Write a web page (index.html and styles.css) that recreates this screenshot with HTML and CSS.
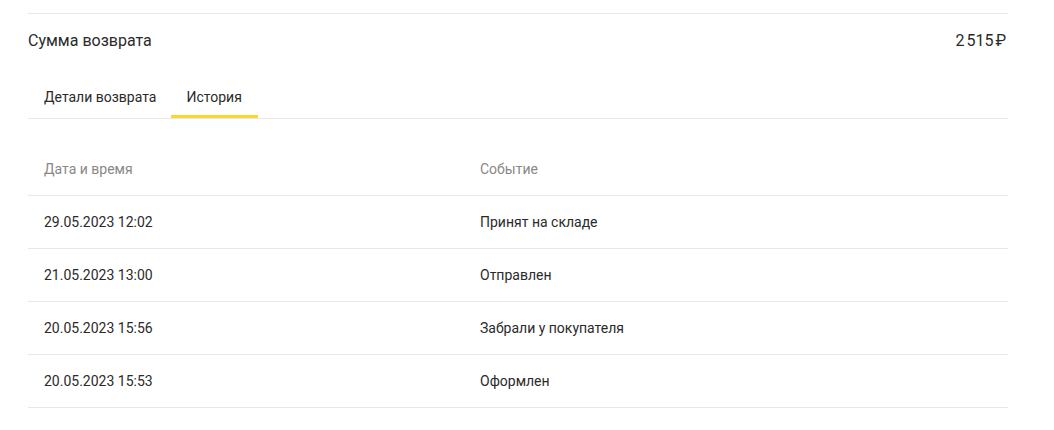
FILE: index.html
```html
<!DOCTYPE html>
<html lang="ru">
<head>
<meta charset="utf-8">
<link rel="stylesheet" href="styles.css">
</head>
<body>
<div class="page">
  <div class="summary">
    <span class="summary-label">Сумма возврата</span>
    <span class="summary-value">2&#8239;515&#8239;₽</span>
  </div>
  <div class="tabs">
    <div class="tab">Детали возврата</div>
    <div class="tab tab-active">История</div>
  </div>
  <div class="table">
    <div class="row row-head">
      <div class="cell cell-date">Дата и время</div>
      <div class="cell">Событие</div>
    </div>
    <div class="row">
      <div class="cell cell-date">29.05.2023 12:02</div>
      <div class="cell">Принят на складе</div>
    </div>
    <div class="row">
      <div class="cell cell-date">21.05.2023 13:00</div>
      <div class="cell">Отправлен</div>
    </div>
    <div class="row">
      <div class="cell cell-date">20.05.2023 15:56</div>
      <div class="cell">Забрали у покупателя</div>
    </div>
    <div class="row">
      <div class="cell cell-date">20.05.2023 15:53</div>
      <div class="cell">Оформлен</div>
    </div>
  </div>
</div>
</body>
</html>
```
FILE: styles.css
```css
html, body {
  margin: 0;
  padding: 0;
  background: #fff;
}
body {
  font-family: Roboto, "Noto Sans", Arial, sans-serif;
  color: #2b2a29;
}
.page {
  margin: 13px 46px 0 28px;
  border-top: 1px solid #e8e8e8;
}
.summary {
  display: flex;
  justify-content: space-between;
  align-items: center;
  height: 52px;
  font-size: 16px;
  padding-right: 2px;
}
.tabs {
  display: flex;
  border-bottom: 1px solid #e8e8e8;
  margin-top: 3px;
}
.tab {
  font-size: 14px;
  padding: 0 15px 0 16px;
  height: 49px;
  line-height: 56px;
  box-sizing: border-box;
  border-bottom: 3px solid transparent;
}
.tab-active {
  border-bottom-color: #fcd72a;
  padding: 0 16px 0 15px;
}
.table {
  margin-top: 24px;
}
.row {
  display: flex;
  height: 53px;
  align-items: center;
  border-bottom: 1px solid #e8e8e8;
  box-sizing: border-box;
  font-size: 14px;
}
.row-head {
  color: #8a8886;
}
.cell {
  padding-left: 16px;
}
.cell-date {
  width: 420px;
}
```
